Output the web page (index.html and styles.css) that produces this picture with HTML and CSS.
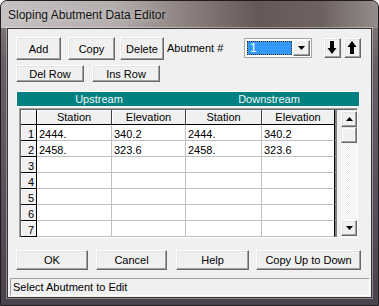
FILE: index.html
```html
<!DOCTYPE html>
<html>
<head>
<meta charset="utf-8">
<link rel="stylesheet" href="styles.css">
</head>
<body>
<div class="window">
  <div class="titlebar"><span class="title">Sloping Abutment Data Editor</span></div>
  <div class="client">
    <div class="row row-top">
      <button class="btn b-add">Add</button>
      <button class="btn b-copy">Copy</button>
      <button class="btn b-delete">Delete</button>
      <span class="label">Abutment #</span>
      <div class="combo">
        <div class="combo-field"><span>1</span></div>
        <div class="combo-btn"><svg width="7" height="4" viewBox="0 0 7 4"><polygon points="0,0 7,0 3.5,4" fill="#000"/></svg></div>
      </div>
      <button class="btn arrow b-down"><svg width="15" height="18" viewBox="0 0 15 18"><rect x="5" y="2" width="4" height="8" fill="#000"/><polygon points="2.5,9 11.5,9 7,15" fill="#000"/></svg></button>
      <button class="btn arrow b-up"><svg width="15" height="18" viewBox="0 0 15 18"><polygon points="2.5,8 11.5,8 7,2" fill="#000"/><rect x="5" y="7" width="4" height="8" fill="#000"/></svg></button>
    </div>
    <div class="row row-edit">
      <button class="btn b-row">Del Row</button>
      <button class="btn b-row b-ins">Ins Row</button>
    </div>
    <div class="band">
      <span class="band-up">Upstream</span>
      <span class="band-down">Downstream</span>
    </div>
    <div class="grid">
      <div class="grid-body">
        <div class="table">
          <div class="corner"></div>
          <div class="colhead">Station</div>
          <div class="colhead">Elevation</div>
          <div class="colhead">Station</div>
          <div class="colhead last">Elevation</div>

          <div class="rowhead">1</div><div class="cell">2444.</div><div class="cell">340.2</div><div class="cell">2444.</div><div class="cell last">340.2</div>
          <div class="rowhead">2</div><div class="cell">2458.</div><div class="cell">323.6</div><div class="cell">2458.</div><div class="cell last">323.6</div>
          <div class="rowhead">3</div><div class="cell"></div><div class="cell"></div><div class="cell"></div><div class="cell last"></div>
          <div class="rowhead">4</div><div class="cell"></div><div class="cell"></div><div class="cell"></div><div class="cell last"></div>
          <div class="rowhead">5</div><div class="cell"></div><div class="cell"></div><div class="cell"></div><div class="cell last"></div>
          <div class="rowhead">6</div><div class="cell"></div><div class="cell"></div><div class="cell"></div><div class="cell last"></div>
          <div class="rowhead">7</div><div class="cell"></div><div class="cell"></div><div class="cell"></div><div class="cell last"></div>
        </div>
        <div class="gapcol"></div>
        <div class="scrollbar">
          <div class="sb-btn"><svg width="7" height="4" viewBox="0 0 7 4"><polygon points="0,4 7,4 3.5,0" fill="#000"/></svg></div>
          <div class="sb-thumb"></div>
          <div class="sb-track"></div>
          <div class="sb-btn"><svg width="7" height="4" viewBox="0 0 7 4"><polygon points="0,0 7,0 3.5,4" fill="#000"/></svg></div>
        </div>
      </div>
    </div>
    <div class="row row-bottom">
      <button class="btn b-ok">OK</button>
      <button class="btn b-cancel">Cancel</button>
      <button class="btn b-help">Help</button>
      <button class="btn b-cud">Copy Up to Down</button>
    </div>
    <div class="status">Select Abutment to Edit</div>
  </div>
</div>
</body>
</html>
```

FILE: styles.css
```css
* { box-sizing: border-box; }

body {
  margin: 0;
  background: #ffffff;
  font-family: "Liberation Sans", Arial, sans-serif;
  font-size: 11px;
  color: #000;
}

.window {
  width: 379px;
  height: 306px;
  border: 1px solid #1f1b1f;
  border-radius: 7px 7px 0 0;
  background: linear-gradient(to bottom, #8c8482 0px, #6a5f66 60px, #5a4e5c 200px, #4a424c 100%);
  display: flex;
  flex-direction: column;
  overflow: hidden;
}

.titlebar {
  height: 27px;
  padding: 7px 0 0 7px;
  line-height: 14px;
  background: linear-gradient(to right, #c6c2c1 0%, #b4aead 30%, #8a7e7c 50%, #665856 68%, #6e6260 85%, #958d8b 100%);
}

.title {
  font-size: 12px;
  color: #111;
  text-shadow: 0 0 5px rgba(255, 255, 255, 0.55);
}

.client {
  margin: 0 6px;
  width: 365px;
  height: 270px;
  border: 1px solid #3a3438;
  background: #f0f0f0;
  display: flex;
  flex-direction: column;
  box-shadow: 0 0 0 1px rgba(255, 255, 255, 0.35);
}

.row {
  display: flex;
  align-items: flex-start;
  margin-left: 8px;
}

.btn {
  background: #f0f0f0;
  border: 1px solid;
  border-color: #ffffff #696969 #696969 #ffffff;
  box-shadow: inset -1px -1px #a0a0a0, inset 1px 1px #e3e3e3;
  font-family: "Liberation Sans", Arial, sans-serif;
  font-size: 11px;
  color: #000;
  padding: 0;
  margin: 0;
  display: flex;
  align-items: center;
  justify-content: center;
}

.row-top { margin-top: 8px; height: 23px; }
.b-add { width: 45px; height: 23px; }
.b-copy { width: 47px; height: 23px; margin-left: 7px; }
.b-delete { width: 44px; height: 23px; margin-left: 5px; }

.label {
  width: 77px;
  margin-left: 3px;
  line-height: 23px;
}

.combo {
  width: 68px;
  height: 20px;
  margin-top: 1px;
  border: 1px solid #a5a5a5;
  background: #fff;
  padding: 1px;
  display: flex;
}

.combo-field {
  flex: 1;
  margin: 1px 0 1px 1px;
  background: #3399ff;
  border: 1px dotted #3b2a10;
  color: #fff;
  padding-left: 2px;
  line-height: 12px;
  font-size: 12px;
}

.combo-btn {
  width: 17px;
  height: 16px;
  margin-left: 1px;
  background: #f0f0f0;
  border: 1px solid;
  border-color: #ffffff #696969 #696969 #ffffff;
  box-shadow: inset -1px -1px #a0a0a0;
  display: flex;
  align-items: center;
  justify-content: center;
}

.arrow { width: 17px; height: 20px; margin-top: 1px; }
.b-down { margin-left: 12px; }
.b-up { margin-left: 3px; }

.row-edit { margin-top: 5px; height: 17px; }
.b-row { width: 68px; height: 17px; }
.b-ins { margin-left: 8px; }

.band {
  margin: 9px 0 0 8px;
  width: 344px;
  height: 16px;
  background: #008080;
  border: 1px solid #fbfbfb;
  color: #f2f8f8;
  display: flex;
  line-height: 14px;
}

.band-up { width: 164px; text-align: center; }
.band-down { width: 176px; text-align: center; }

.grid {
  margin: 1px 0 0 11px;
  width: 339px;
  height: 130px;
  border: 1px solid;
  border-color: #a0a0a0 #ffffff #ffffff #a0a0a0;
}

.grid-body {
  height: 128px;
  border-top: 1px solid #696969;
  border-left: 1px solid #696969;
  display: flex;
}

.table {
  display: grid;
  grid-template-columns: 16px 75px 74px 76px 73px;
  grid-template-rows: 15px repeat(7, 16px);
  background: #fff;
}

.corner, .colhead, .rowhead {
  background: #f0f0f0;
  border-right: 1px solid #000;
  border-bottom: 1px solid #000;
  box-shadow: inset 1px 1px #ffffff;
}

.colhead {
  text-align: center;
  line-height: 14px;
  border-right-color: #404040;
}

.rowhead {
  text-align: right;
  padding: 2px 2px 0 0;
  line-height: 14px;
}

.cell {
  border-right: 1px solid #c0c0c0;
  border-bottom: 1px solid #c0c0c0;
  padding: 2px 0 0 2px;
  line-height: 14px;
  white-space: nowrap;
}

.cell.last, .colhead.last { border-right-color: #000; }

.gapcol {
  width: 2px;
  background: #808080;
}

.scrollbar {
  width: 20px;
  padding: 1px 0 1px 4px;
  display: flex;
  flex-direction: column;
  background-color: #f0f0f0;
}

.sb-btn {
  width: 16px;
  height: 16px;
  background: #f0f0f0;
  border: 1px solid;
  border-color: #ffffff #696969 #696969 #ffffff;
  box-shadow: inset -1px -1px #a0a0a0, inset 1px 1px #e3e3e3;
  display: flex;
  align-items: center;
  justify-content: center;
}

.sb-thumb {
  width: 16px;
  height: 16px;
  background: #f0f0f0;
  border: 1px solid;
  border-color: #e3e3e3 #696969 #696969 #e3e3e3;
  box-shadow: inset -1px -1px #a0a0a0, inset 1px 1px #ffffff;
}

.sb-track {
  flex: 1;
  width: 16px;
  background-image: repeating-conic-gradient(#ffffff 0 25%, #ececec 0 50%);
  background-size: 2px 2px;
}

.row-bottom { margin-top: 12px; height: 20px; }
.b-ok { width: 72px; height: 20px; }
.b-cancel { width: 71px; height: 20px; margin-left: 8px; }
.b-help { width: 73px; height: 20px; margin-left: 9px; }
.b-cud { width: 105px; height: 20px; margin-left: 7px; }

.status {
  margin: 8px 0 0 2px;
  width: 360px;
  height: 18px;
  border: 1px solid;
  border-color: #a0a0a0 #ffffff #ffffff #a0a0a0;
  padding-left: 2px;
  line-height: 16px;
}
```
